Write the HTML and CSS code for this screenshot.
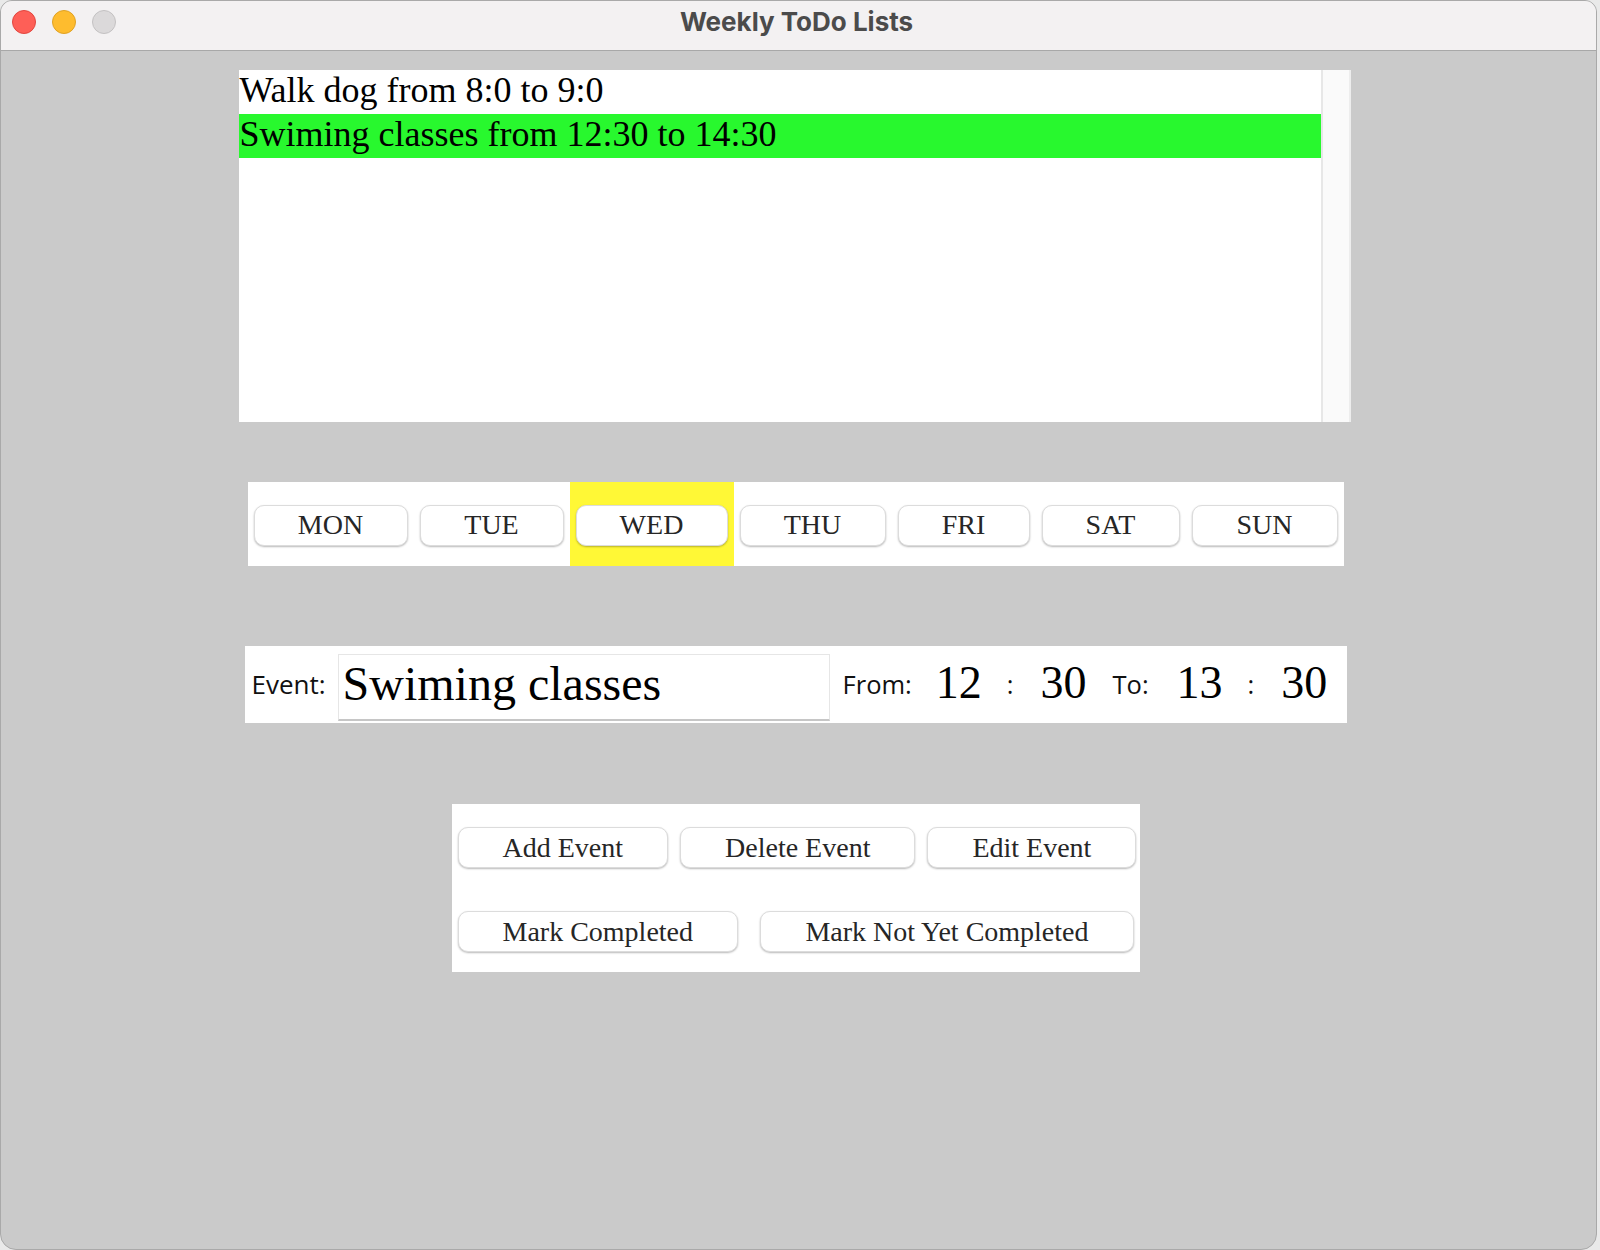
FILE: index.html
```html
<!DOCTYPE html>
<html>
<head>
<meta charset="utf-8">
<title>Weekly ToDo Lists</title>
<link rel="stylesheet" href="styles.css">
</head>
<body>
<div class="window">
  <div class="titlebar">
    <div class="lights">
      <span class="light red"></span>
      <span class="light yellow"></span>
      <span class="light grey"></span>
    </div>
    <div class="title">Weekly ToDo Lists</div>
  </div>
  <div class="content">
    <div class="list">
      <div class="list-items">
        <div class="item">Walk dog from 8:0 to 9:0</div>
        <div class="item done">Swiming classes from 12:30 to 14:30</div>
      </div>
      <div class="scrollbar"></div>
    </div>

    <div class="days">
      <div class="day"><button class="btn d-mon">MON</button></div>
      <div class="day"><button class="btn d-tue">TUE</button></div>
      <div class="day active"><button class="btn d-wed">WED</button></div>
      <div class="day"><button class="btn d-thu">THU</button></div>
      <div class="day"><button class="btn d-fri">FRI</button></div>
      <div class="day"><button class="btn d-sat">SAT</button></div>
      <div class="day"><button class="btn d-sun">SUN</button></div>
    </div>

    <div class="event-row">
      <span class="lbl lbl-event">Event:</span>
      <div class="field">Swiming classes</div>
      <span class="lbl lbl-from">From:</span>
      <span class="num">12</span>
      <span class="sep">:</span>
      <span class="num num-b">30</span>
      <span class="lbl lbl-to">To:</span>
      <span class="num num-c">13</span>
      <span class="sep">:</span>
      <span class="num num-b">30</span>
    </div>

    <div class="actions">
      <div class="row row-1">
        <button class="btn">Add Event</button>
        <button class="btn">Delete Event</button>
        <button class="btn">Edit Event</button>
      </div>
      <div class="row row-2">
        <button class="btn">Mark Completed</button>
        <button class="btn">Mark Not Yet Completed</button>
      </div>
    </div>
  </div>
</div>
</body>
</html>
```

FILE: styles.css
```css
html, body {
  margin: 0;
  padding: 0;
}
body {
  background: #e9e9e9;
  width: 1600px;
  height: 1250px;
  overflow: hidden;
}
.window {
  width: 1597px;
  height: 1250px;
  box-sizing: border-box;
  border: 1px solid #a9a9a9;
  border-radius: 12px 12px 16px 16px;
  overflow: hidden;
  background: #cacaca;
  display: flex;
  flex-direction: column;
}
.titlebar {
  height: 49px;
  flex: 0 0 49px;
  background: #f3f1f2;
  border-bottom: 1px solid #a8a8a8;
  position: relative;
  display: flex;
  align-items: center;
  justify-content: center;
}
.lights {
  position: absolute;
  left: 11px;
  top: 9px;
  display: flex;
  gap: 16px;
}
.light {
  width: 22px;
  height: 22px;
  border-radius: 50%;
  border: 1px solid transparent;
}
.red { background: #fe5f57; border-color: #e1463f; }
.yellow { background: #febc2e; border-color: #dfa124; }
.grey { background: #dbd9da; border-color: #c3c1c2; }
.title {
  font-family: Inter, "Liberation Sans", sans-serif;
  font-weight: 700;
  font-size: 26px;
  color: #4b4b4b;
  margin-top: -8px;
  padding-right: 4px;
}
.content {
  flex: 1;
  display: flex;
  flex-direction: column;
  align-items: center;
  padding-right: 6px;
}

/* list */
.list {
  margin-top: 19px;
  margin-right: 2px;
  width: 1112px;
  height: 352px;
  background: #fff;
  display: flex;
}
.list-items {
  flex: 1;
}
.item {
  height: 44px;
  line-height: 40px;
  font-family: "Liberation Serif", "Times New Roman", serif;
  font-size: 36px;
  color: #000;
  padding-left: 1px;
  white-space: nowrap;
}
.item.done {
  background: #28f82e;
}
.scrollbar {
  width: 26px;
  background: #fafafa;
  border-left: 2px solid #e7e7e7;
  border-right: 2px solid #ededed;
}

/* buttons */
.btn {
  font-family: "Liberation Serif", "Times New Roman", serif;
  font-size: 28px;
  color: #262626;
  background: #fff;
  border: 1px solid #dcdcdc;
  border-radius: 10px;
  box-shadow: 0 1px 2px rgba(0, 0, 0, 0.28);
  height: 41px;
  padding: 0 44px;
  margin: 0;
  line-height: 1;
  white-space: nowrap;
}

/* days */
.days {
  margin-top: 60px;
  width: 1096px;
  height: 84px;
  background: #fff;
  display: flex;
}
.day {
  padding: 0 6px;
  display: flex;
  align-items: center;
  flex: 0 0 auto;
}
.day.active {
  background: #fff836;
}
.days .btn { padding: 0; margin-top: 2px; }
.d-mon { width: 154px; }
.d-tue { width: 144px; }
.d-wed { width: 152px; }
.d-thu { width: 146px; }
.d-fri { width: 132px; }
.d-sat { width: 138px; }
.d-sun { width: 146px; }

/* event row */
.event-row {
  margin-top: 80px;
  width: 1102px;
  height: 77px;
  background: #fff;
  display: flex;
  align-items: center;
  box-sizing: border-box;
}
.lbl, .sep {
  font-family: "Open Sans", "Noto Sans", sans-serif;
  font-size: 25.5px;
  color: #111;
  margin-top: -2px;
}
.lbl-event { margin-left: 7px; font-size: 26px; }
.field {
  margin-left: 12px;
  width: 492px;
  height: 67px;
  box-sizing: border-box;
  border: 1px solid #e6e6e6;
  border-bottom: 2px solid #c6c6c6;
  font-family: "Liberation Serif", "Times New Roman", serif;
  font-size: 48px;
  line-height: 58px;
  padding-left: 4px;
  color: #000;
  margin-top: 5px;
}
.lbl-from { margin-left: 13px; }
.num {
  font-family: "Liberation Serif", "Times New Roman", serif;
  font-size: 46px;
  line-height: 1;
  color: #000;
  margin-left: 24px;
  margin-top: -4px;
}
.num-b { margin-left: 27px; }
.num-c { margin-left: 28px; }
.sep { margin-left: 25px; }
.lbl-to { margin-left: 26px; }

/* actions */
.actions {
  margin-top: 81px;
  width: 688px;
  height: 168px;
  background: #fff;
  box-sizing: border-box;
  padding: 23px 6px 0;
  display: flex;
  flex-direction: column;
  gap: 43px;
}
.row {
  display: flex;
}
.row-1 {
  gap: 12px;
}
.row-2 {
  justify-content: space-between;
}
```
